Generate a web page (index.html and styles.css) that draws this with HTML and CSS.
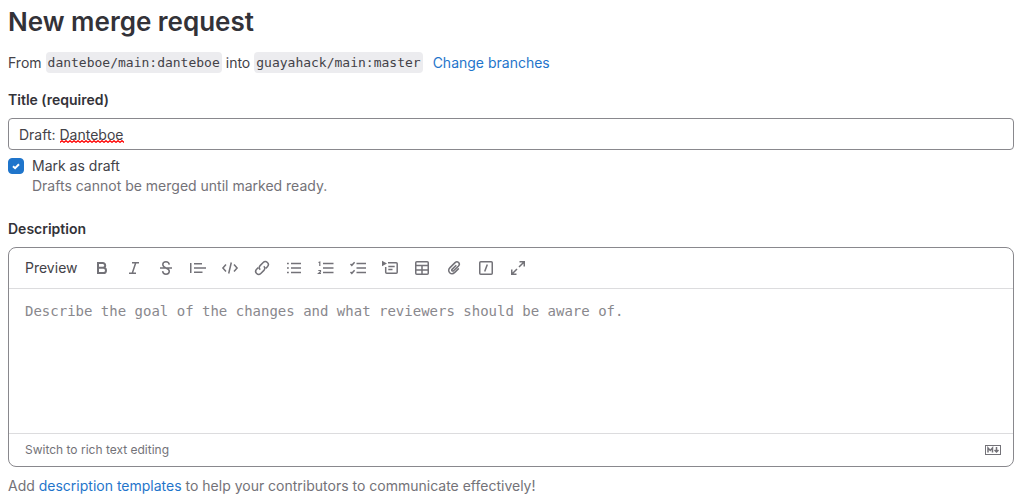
FILE: index.html
```html
<!DOCTYPE html>
<html lang="en">
<head>
<meta charset="utf-8">
<meta name="viewport" content="width=device-width, initial-scale=1">
<title>New merge request</title>
<link rel="stylesheet" href="styles.css">
</head>
<body>
<main class="page">
  <h1 class="page-title">New merge request</h1>
  <div class="branches">
    <span>From</span>
    <code class="branch">danteboe/main:danteboe</code>
    <span>into</span>
    <code class="branch">guayahack/main:master</code>
    <a class="link change-link" href="#">Change branches</a>
  </div>

  <form class="form">
    <label class="label" for="title">Title (required)</label>
    <div class="title-field">
      <input class="title-input" id="title" type="text" value="Draft: Danteboe" spellcheck="false" required>
      <svg class="spelling-mark" width="64" height="3" viewBox="0 0 64 3" aria-hidden="true">
        <defs><pattern id="wave" width="4" height="3" patternUnits="userSpaceOnUse"><path d="M-1 1.5 0 2.3 2 .7 4 2.3 5 1.5" fill="none" stroke="#f00" stroke-width="1.3"/></pattern></defs>
        <rect width="64" height="3" fill="url(#wave)"/>
      </svg>
    </div>
    <div class="draft">
      <span class="check">
        <input class="check-input" id="draft" type="checkbox" checked aria-describedby="draft-help">
        <svg class="check-mark" width="16" height="16" viewBox="0 0 16 16" aria-hidden="true"><path d="M5 8.2 7.1 10.2 11 6.2" fill="none" stroke="#fff" stroke-width="2"/></svg>
      </span>
      <div class="draft-text">
        <label for="draft">Mark as draft</label>
        <p class="help" id="draft-help">Drafts cannot be merged until marked ready.</p>
      </div>
    </div>

    <label class="label" for="description">Description</label>
    <div class="editor">
      <div class="toolbar">
        <button class="preview" type="button">Preview</button>
        <button class="tool" type="button" aria-label="Bold"><svg class="icon" viewBox="0 0 16 16"><path d="M4 3h4.800a2.300 2.300 0 0 1 0 4.800H4zM4 7.800h5.400a2.600 2.600 0 0 1 0 5.200H4z" stroke-width="2"/></svg></button>
        <button class="tool" type="button" aria-label="Italic"><svg class="icon" viewBox="0 0 16 16"><path d="M6 2.750h7M3 13.250h7M9.750 2.750l-3.500 10.500"/></svg></button>
        <button class="tool" type="button" aria-label="Strikethrough"><svg class="icon" viewBox="0 0 16 16"><path d="M2 8h12M11.300 4.700C11 2.800 9.700 1.800 8 1.800c-1.900 0-3.200 1.100-3.200 2.800C4.800 6.300 6 7.200 8 8s3.300 1.600 3.300 3.300c0 1.800-1.400 2.900-3.300 2.900-1.900 0-3.200-1.100-3.400-3"/></svg></button>
        <button class="tool" type="button" aria-label="Quote"><svg class="icon" viewBox="0 0 16 16"><path d="M.75 3v10M4 3.750h8M4 8h12M4 12.250h8.500"/></svg></button>
        <button class="tool" type="button" aria-label="Code"><svg class="icon" viewBox="0 0 16 16"><path d="M4 4.500.900 8 4 11.500M12 4.500 15.100 8 12 11.500M9.300 2.500l-2.600 11"/></svg></button>
        <button class="tool" type="button" aria-label="Link"><svg class="icon" viewBox="0 0 16 16"><path d="M6.200 9.700C4.900 8.500 5 6.700 6.100 5.600l3.100-3.100c1.200-1.200 3-1.200 4.200 0s1.200 3 0 4.200l-1.700 1.700M9.800 6.300c1.300 1.200 1.200 3 .1 4.100l-3.100 3.100c-1.200 1.200-3 1.200-4.200 0s-1.200-3 0-4.200l1.700-1.700"/></svg></button>
        <button class="tool" type="button" aria-label="Bulleted list"><svg class="icon" viewBox="0 0 16 16"><path d="M5 3.500h10M5 8h10M5 12.500h10M1 3.500h1.800M1 8h1.800M1 12.500h1.800"/></svg></button>
        <button class="tool" type="button" aria-label="Numbered list"><svg class="icon" viewBox="0 0 16 16"><path d="M5 3.500h10.500M5 8h10.500M5 12.500h10.500"/><path d="M.5 2.500 1.800 2v4M.3 10.500h2.200v1.300L.6 13.500h2.400" stroke-width="1.200"/></svg></button>
        <button class="tool" type="button" aria-label="Checklist"><svg class="icon" viewBox="0 0 16 16"><path d="M6.500 3.500H16M6.500 8H16M6.500 12.500H16M.5 4l1.300 1.300L4.600 2.300M.5 12l1.300 1.300 2.800-3"/></svg></button>
        <button class="tool" type="button" aria-label="Collapsible section"><svg class="icon" viewBox="0 0 16 16"><path d="M6 2.750h8.200a1 1 0 0 1 1 1v8.500a1 1 0 0 1-1 1H4.700a1 1 0 0 1-1-1V7M6.300 6.500h6.400M6.300 9.500h4.200"/><path d="M0 .8v5.400l5-2.700z" fill="currentColor" stroke="none"/></svg></button>
        <button class="tool" type="button" aria-label="Table"><svg class="icon" viewBox="0 0 16 16"><rect x="1.750" y="1.750" width="12.500" height="12.500" rx="1"/><path d="M2 5.500h12M2 9.900h12M8 5.500V14"/></svg></button>
        <button class="tool" type="button" aria-label="Attach file"><svg class="icon" viewBox="0 0 16 16"><path d="m10.300 5.200-4.200 4.200c-.5.500-.5 1 0 1.400s1 .4 1.500 0L12.500 6c1.100-1.200 1.100-2.500.1-3.500s-2.400-1-3.500.1L4 7.600c-1.700 1.700-1.700 3.700-.3 5.100s3.400 1.400 5.100-.3l4-4"/></svg></button>
        <button class="tool" type="button" aria-label="Quick action"><svg class="icon" viewBox="0 0 16 16"><rect x="1.750" y="1.750" width="12.500" height="12.500" rx="1"/><path d="M9.300 4.500 6.700 11.500"/></svg></button>
        <button class="tool" type="button" aria-label="Full screen"><svg class="icon" viewBox="0 0 16 16"><path d="M9.500 1.750h4.750V6.500M14 2 9 7M1.750 9.500v4.750H6.500M2 14l5-5"/></svg></button>
      </div>
      <textarea class="description" id="description" placeholder="Describe the goal of the changes and what reviewers should be aware of."></textarea>
      <div class="editor-footer">
        <button class="switch" type="button">Switch to rich text editing</button>
        <a class="markdown" href="#" aria-label="Markdown is supported"><svg width="16" height="16" viewBox="0 0 16 16" fill="none" stroke="currentColor"><rect x=".5" y="3.500" width="15" height="9"/><path d="M3 10.500V6l2.250 2.500L7.500 6v4.500M11.500 5v5M9.500 8l2 2 2-2" stroke-width="1.500"/></svg></a>
      </div>
    </div>
    <p class="help templates">Add <a class="link" href="#">description templates</a> to help your contributors to communicate effectively!</p>
  </form>
</main>
</body>
</html>
```
FILE: styles.css
```css
* {
  box-sizing: border-box;
}

body {
  margin: 0;
  background: #fff;
  color: #434248;
  font: 14px/20px Inter, "Noto Sans", sans-serif;
}

button,
input,
textarea {
  margin: 0;
  font: inherit;
  color: inherit;
}

button {
  padding: 0;
  border: 0;
  background: none;
  cursor: pointer;
}

.page {
  padding: 4px 3px 0 8px;
}

.page-title {
  margin: 0 0 12px;
  color: #333238;
  font-size: 26px;
  line-height: 36px;
  font-weight: 600;
}

.branches {
  display: flex;
  flex-wrap: wrap;
  align-items: center;
  gap: 4px;
}

.branch {
  padding: 0 2px;
  border-radius: 4px;
  background: #ececef;
  color: #434248;
  font: 13px/21px "DejaVu Sans Mono", "Liberation Mono", monospace;
}

.link {
  color: #1f75cb;
  text-decoration: none;
}

.link:hover {
  text-decoration: underline;
}

.change-link {
  margin-left: 6px;
}

.form {
  margin-top: 17px;
}

.label {
  display: block;
  margin-bottom: 8px;
  color: #333238;
  font-weight: 600;
}

.title-field {
  position: relative;
}

.title-input {
  display: block;
  width: 100%;
  height: 32px;
  padding: 0 10px;
  border: 1px solid #89888d;
  border-radius: 4px;
  background: #fff;
}

.spelling-mark {
  position: absolute;
  left: 52px;
  bottom: 7px;
}

.draft {
  display: flex;
  gap: 8px;
  margin: 6px 0 23px;
}

.check {
  display: grid;
  align-self: start;
  margin-top: 2px;
}

.check-input,
.check-mark {
  grid-area: 1 / 1;
}

.check-input {
  width: 16px;
  height: 16px;
  appearance: none;
  border: 1px solid #89888d;
  border-radius: 4px;
}

.check-input:checked {
  border-color: #1f75cb;
  background: #1f75cb;
}

.check-mark {
  pointer-events: none;
}

.help {
  margin: 0;
  color: #737278;
}

.editor {
  overflow: hidden;
  border: 1px solid #89888d;
  border-radius: 8px;
}

.toolbar {
  display: flex;
  flex-wrap: wrap;
  align-items: center;
  gap: 8px;
  padding: 8px 12px 8px 16px;
  border-bottom: 1px solid #dcdcde;
}

.preview {
  margin-right: 4px;
}

.tool {
  display: grid;
  place-items: center;
  width: 24px;
  height: 24px;
  color: #737278;
}

.icon {
  width: 16px;
  height: 16px;
  fill: none;
  stroke: currentColor;
  stroke-width: 1.5;
  overflow: visible;
}

.description {
  display: block;
  width: 100%;
  height: 144px;
  padding: 12px 16px;
  border: 0;
  outline: 0;
  resize: none;
  font-family: "DejaVu Sans Mono", "Liberation Mono", monospace;
}

.description::placeholder {
  color: #89888d;
}

.editor-footer {
  display: flex;
  align-items: center;
  justify-content: space-between;
  padding: 8px 12px 8px 16px;
  border-top: 1px solid #dcdcde;
  color: #737278;
}

.switch {
  font-size: 12px;
  line-height: 16px;
}

.markdown {
  display: flex;
  color: inherit;
}

.templates {
  margin-top: 9px;
}
```
